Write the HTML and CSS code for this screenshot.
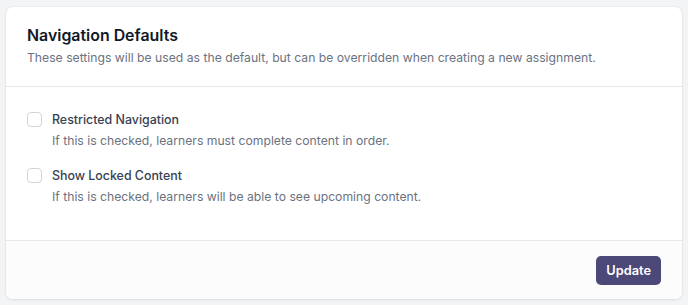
FILE: index.html
```html
<!DOCTYPE html>
<html lang="en"><head>
  <meta charset="UTF-8"/>
  <meta name="viewport" content="width=device-width,initial-scale=1"/>
  <title>Navigation Defaults</title>
  <link rel="stylesheet" href="styles.css">
</head><body>
  <form class="card">
    <div class="card-head">
      <h2>Navigation Defaults</h2>
      <p>These settings will be used as the default, but can be overridden when creating a new assignment.</p>
    </div>
    <div class="card-body">
      <label class="option">
        <input type="checkbox" class="box"/>
        <span class="option-text">
          <span class="option-name">Restricted Navigation</span>
          <span class="option-help">If this is checked, learners must complete content in order.</span>
        </span>
      </label>
      <label class="option">
        <input type="checkbox" class="box"/>
        <span class="option-text">
          <span class="option-name">Show Locked Content</span>
          <span class="option-help">If this is checked, learners will be able to see upcoming content.</span>
        </span>
      </label>
    </div>
    <div class="card-foot">
      <button type="button" class="btn">Update</button>
    </div>
  </form>
</body></html>
```

FILE: styles.css
```css
body {margin:0;background:#f3f4f6;font-family:Inter,'Noto Sans',sans-serif;color:#111827}
.card {margin:7px 6px 6px 6px;background:#fff;border-radius:7px;
       box-shadow:0 1px 3px rgba(0,0,0,0.08),0 0 0 1px rgba(0,0,0,0.02);overflow:hidden}
.card-head {padding:18px 21px 19px 21px;border-bottom:1px solid #e5e7eb}
.card-head h2 {margin:0;font-size:15.9px;font-weight:600;line-height:22px;color:#111827}
.card-head p {margin:2px 0 0;font-size:12.2px;line-height:18px;color:#6b7280}
.card-body {padding:22px 21px 33px;display:flex;flex-direction:column;gap:14px}
.option {display:flex;gap:10px;align-items:flex-start}
.box {appearance:none;-webkit-appearance:none;margin:3px 0 0;width:15px;height:15px;
      border:1px solid #d1d5db;border-radius:4px;background:#fff;flex:none}
.option-text {display:flex;flex-direction:column}
.option-name {font-size:12.4px;font-weight:500;line-height:21px;color:#374151}
.option-help {font-size:12.2px;line-height:21px;color:#6b7280}
.card-foot {background:#fcfcfd;border-top:1px solid #e5e7eb;padding:15px 21px 14px;
            display:flex;justify-content:flex-end}
.btn {font-family:inherit;font-size:12.8px;font-weight:600;color:#fff;background:#4c4878;
      border:0;border-radius:5px;height:29px;padding:0 10px;cursor:pointer}
```
